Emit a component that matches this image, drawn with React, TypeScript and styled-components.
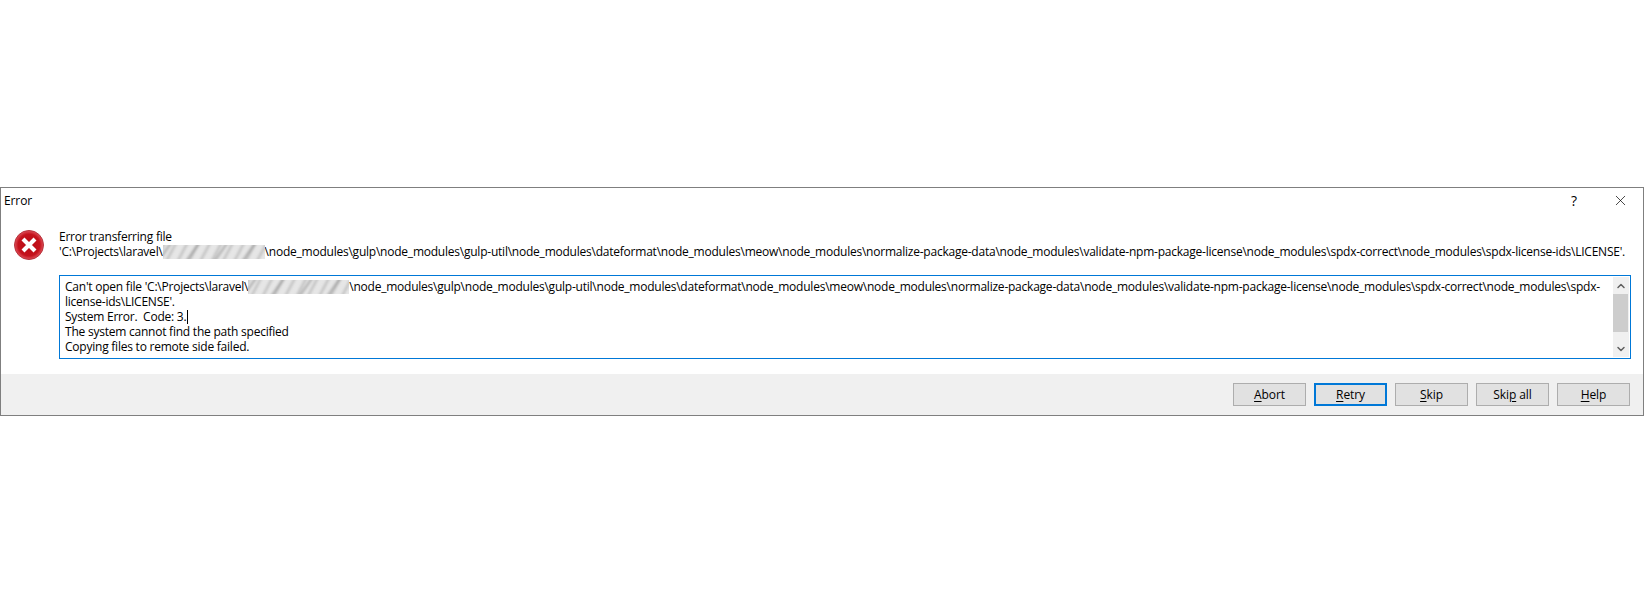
import React from 'react';
import styled, { createGlobalStyle } from 'styled-components';
import { X, ChevronUp, ChevronDown } from 'lucide-react';

const Global = createGlobalStyle`
  html, body { margin: 0; padding: 0; background: #fff; }
  body { font-family: "Open Sans", "Noto Sans", "Liberation Sans", sans-serif; font-size: 12px; color: #000; }
`;

const Page = styled.div`
  width: 1644px;
  height: 600px;
  padding-top: 187px;
  box-sizing: border-box;
`;

const Dialog = styled.div`
  height: 229px;
  border: 1px solid #7f7f7f;
  box-sizing: border-box;
  display: flex;
  flex-direction: column;
`;

const TitleBar = styled.div`
  height: 24px;
  display: flex;
  align-items: center;
  padding-left: 3px;
  letter-spacing: -0.1px;
`;

const TitleText = styled.span`
  flex: 1;
`;

const TitleButton = styled.div`
  width: 46px;
  display: flex;
  justify-content: center;
  font-size: 14px;
`;

const Body = styled.div`
  flex: 1;
  display: flex;
  padding: 17px 12px 0 13px;
`;

const ErrorIcon = styled.svg`
  width: 30px;
  height: 30px;
  margin-top: 1px;
  margin-right: 15px;
  flex: none;
`;

const Content = styled.div`
  flex: 1;
  min-width: 0;
`;

const Line = styled.div`
  height: 15px;
  line-height: 15px;
  white-space: nowrap;
  letter-spacing: -0.23px;
`;

const Smudge = styled.span<{ $w: number }>`
  display: inline-block;
  position: relative;
  overflow: hidden;
  width: ${(p) => p.$w}px;
  height: 14px;
  vertical-align: -3px;
  background: #e6e6e6;

  &::before {
    content: '';
    position: absolute;
    inset: -4px;
    background:
      repeating-linear-gradient(125deg, transparent 0 9px, rgba(130, 130, 130, 0.6) 11px, transparent 13px 23px),
      repeating-linear-gradient(118deg, transparent 0 4px, rgba(160, 160, 160, 0.6) 6px, transparent 8px 10px);
    filter: blur(1.2px);
  }
`;

const TextBox = styled.div`
  margin-top: 16px;
  height: 84px;
  border: 1px solid #0078d7;
  box-sizing: border-box;
  display: flex;
  padding: 1px 1px 1px 5px;
`;

const TextLines = styled.div`
  flex: 1;
  min-width: 0;
  padding-top: 2px;
`;

const Caret = styled.span`
  display: inline-block;
  width: 1px;
  height: 14px;
  margin-left: 1px;
  background: #000;
  vertical-align: -3px;
`;

const ScrollBar = styled.div`
  width: 16px;
  flex: none;
  display: flex;
  flex-direction: column;
  background: #f0f0f0;
`;

const ScrollArrow = styled.div`
  height: 17px;
  display: flex;
  align-items: center;
  justify-content: center;
  color: #606060;
`;

const Thumb = styled.div`
  height: 38px;
  margin-right: 1px;
  background: #cdcdcd;
`;

const ScrollGap = styled.div`
  flex: 1;
`;

const Footer = styled.div`
  height: 41px;
  background: #f0f0f0;
  display: flex;
  justify-content: flex-end;
  align-items: flex-start;
  gap: 8px;
  padding: 9px 13px 0 0;
  box-sizing: border-box;
`;

const Button = styled.div<{ $default?: boolean }>`
  width: 73px;
  height: 23px;
  box-sizing: border-box;
  background: #e1e1e1;
  border: ${(p) => (p.$default ? '2px solid #0078d7' : '1px solid #adadad')};
  display: flex;
  align-items: center;
  justify-content: center;
  letter-spacing: -0.1px;
  u { text-underline-offset: 2px; }
`;

const MIDDLE = 'node_modules\\gulp\\node_modules\\gulp-util\\node_modules\\dateformat\\node_modules\\meow\\node_modules\\normalize-package-data\\node_modules\\validate-npm-package-license\\node_modules\\spdx-correct\\node_modules\\spdx-';

const App: React.FC = () => (
  <Page>
    <Global />
    <Dialog>
      <TitleBar>
        <TitleText>Error</TitleText>
        <TitleButton>?</TitleButton>
        <TitleButton><X size={17} strokeWidth={1} /></TitleButton>
      </TitleBar>
      <Body>
        <ErrorIcon viewBox="0 0 30 30">
          <defs>
            <radialGradient id="red" cx="50%" cy="50%" r="50%">
              <stop offset="0" stopColor="#b80a14" />
              <stop offset="0.75" stopColor="#c4121c" />
              <stop offset="1" stopColor="#e0505a" />
            </radialGradient>
          </defs>
          <circle cx="15" cy="15" r="14.5" fill="url(#red)" stroke="#b5323b" strokeWidth="1" />
          <path d="M9 9 21 21M21 9 9 21" stroke="#fff" strokeWidth="4.2" />
        </ErrorIcon>
        <Content>
          <Line>Error transferring file</Line>
          <Line>'C:\Projects\laravel\<Smudge $w={102} />\{MIDDLE}license-ids\LICENSE'.</Line>
          <TextBox>
            <TextLines>
              <Line>Can't open file 'C:\Projects\laravel\<Smudge $w={101} />\{MIDDLE}</Line>
              <Line>license-ids\LICENSE'.</Line>
              <Line>System Error.&nbsp; Code: 3.<Caret /></Line>
              <Line>The system cannot find the path specified</Line>
              <Line>Copying files to remote side failed.</Line>
            </TextLines>
            <ScrollBar>
              <ScrollArrow><ChevronUp size={12} strokeWidth={3} /></ScrollArrow>
              <Thumb />
              <ScrollGap />
              <ScrollArrow><ChevronDown size={12} strokeWidth={3} /></ScrollArrow>
            </ScrollBar>
          </TextBox>
        </Content>
      </Body>
      <Footer>
        <Button><span><u>A</u>bort</span></Button>
        <Button $default><span><u>R</u>etry</span></Button>
        <Button><span><u>S</u>kip</span></Button>
        <Button><span>Ski<u>p</u> all</span></Button>
        <Button><span><u>H</u>elp</span></Button>
      </Footer>
    </Dialog>
  </Page>
);

export default App;
